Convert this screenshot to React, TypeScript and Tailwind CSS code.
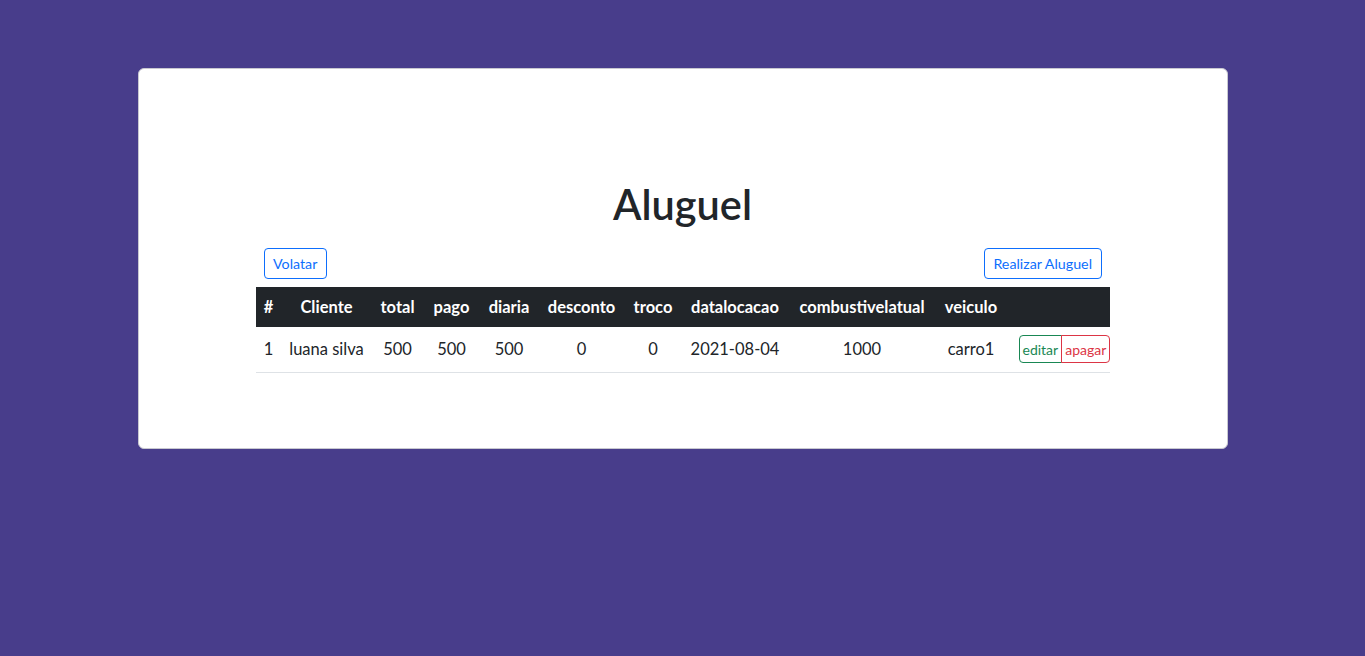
const cols = [
  { head: "#", w: "w-[26px]" },
  { head: "Cliente", w: "w-[90px]" },
  { head: "total", w: "w-[52px]" },
  { head: "pago", w: "w-[56px]" },
  { head: "diaria", w: "w-[59px]" },
  { head: "desconto", w: "w-[86px]" },
  { head: "troco", w: "w-[57px]" },
  { head: "datalocacao", w: "w-[107px]" },
  { head: "combustivelatual", w: "w-[147px]" },
  { head: "veiculo", w: "w-[71px]" },
  { head: "", w: "w-[103px]" },
];

const rows = [
  {
    id: 1,
    cliente: "luana silva",
    total: 500,
    pago: 500,
    diaria: 500,
    desconto: 0,
    troco: 0,
    datalocacao: "2021-08-04",
    combustivel: 1000,
    veiculo: "carro1",
  },
];

export default function App() {
  return (
    <div className="min-h-[656px] bg-[#483d8b] pt-[68px] font-['Segoe_UI',Lato,sans-serif] text-[#212529]">
      <div className="mx-auto w-[1090px] h-[381px] rounded-md border border-[#c8c8d0] bg-white pt-[111px]">
        <h1 className="text-center text-[41.5px] leading-[48px] font-semibold">Aluguel</h1>

        <div className="mx-auto mt-[20px] w-[854px]">
          <div className="flex justify-between px-2">
            <button className="h-[31px] rounded border border-[#0d6efd] px-[8.5px] text-[14.25px] text-[#0d6efd]">
              Volatar
            </button>
            <button className="h-[31px] rounded border border-[#0d6efd] px-[8.5px] text-[14.25px] text-[#0d6efd]">
              Realizar Aluguel
            </button>
          </div>

          <table className="mt-2 w-full table-fixed border-collapse text-center text-[16.5px]">
            <thead>
              <tr className="bg-[#212529] text-white">
                {cols.map((c, i) => (
                  <th key={i} className={`${c.w} h-[40px] p-0 font-bold whitespace-nowrap`}>
                    {c.head}
                  </th>
                ))}
              </tr>
            </thead>
            <tbody>
              {rows.map((r) => (
                <tr key={r.id} className="h-[45px] border-b border-[#dee2e6]">
                  <td className="whitespace-nowrap">{r.id}</td>
                  <td className="whitespace-nowrap">{r.cliente}</td>
                  <td>{r.total}</td>
                  <td>{r.pago}</td>
                  <td>{r.diaria}</td>
                  <td>{r.desconto}</td>
                  <td>{r.troco}</td>
                  <td className="whitespace-nowrap">{r.datalocacao}</td>
                  <td>{r.combustivel}</td>
                  <td>{r.veiculo}</td>
                  <td className="pl-[12px] text-left">
                    <div className="inline-flex h-[28px] text-[14px]">
                      <button className="rounded-l border border-[#198754] px-[3px] text-[#198754]">
                        editar
                      </button>
                      <button className="-ml-px rounded-r border border-[#dc3545] px-[3px] text-[#dc3545]">
                        apagar
                      </button>
                    </div>
                  </td>
                </tr>
              ))}
            </tbody>
          </table>
        </div>
      </div>
    </div>
  );
}
